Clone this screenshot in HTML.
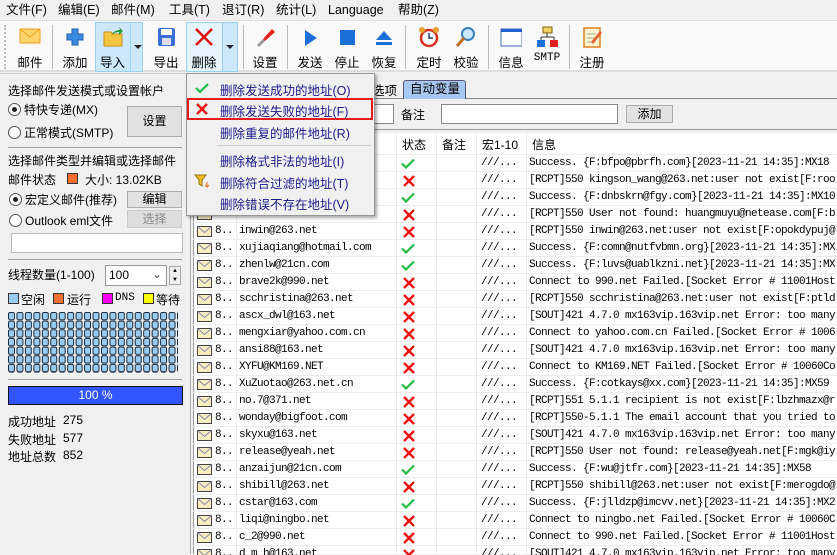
<!DOCTYPE html><html><head><meta charset="utf-8"><style>
*{box-sizing:border-box;margin:0;padding:0}
body{width:837px;height:554px;overflow:hidden;background:#f0f0f0;font-family:"Liberation Sans","Noto Sans CJK SC",sans-serif;font-size:12px;color:#000;position:relative}
.a{position:absolute;white-space:nowrap}
.menu span{position:absolute;top:2px;font-size:12.5px;line-height:16px;height:16px}
.tb{position:absolute;top:20px;left:0;width:837px;height:52px;background:#f9f9f9;border-top:1px solid #e0e0e0;border-bottom:2px solid #ddd}
.ti{position:absolute;top:0;height:52px;text-align:center}
.ti .l{position:absolute;top:31px;left:0;right:0;font-size:12.5px}
.ti svg{position:absolute;top:5px;left:50%;margin-left:-11px}
.sep{position:absolute;top:4px;width:1px;height:44px;background:#bbb}
.btn{position:absolute;background:#e1e1e1;border:1px solid #adadad;text-align:center}
.rad{position:absolute;width:13px;height:13px;border:1px solid #555;border-radius:50%;background:#fff}
.rad.on::after{content:"";position:absolute;left:3px;top:3px;width:5px;height:5px;border-radius:50%;background:#222}
.hl{position:absolute;height:1px;background:#a0a0a0}
.tbl{position:absolute;left:193px;top:133px;width:644px;height:421px;background:#fff;border-left:1px solid #999;overflow:hidden}
.vl{position:absolute;top:0;width:1px;height:421px;background:#ececec}
.mi{position:absolute;left:33px;font-size:12.5px;color:#1a1a8c}
</style></head><body>
<div class="menu">
<span style="left:6px">文件(F)</span><span style="left:58px">编辑(E)</span><span style="left:111px">邮件(M)</span><span style="left:169px">工具(T)</span><span style="left:222px">退订(R)</span><span style="left:276px">统计(L)</span><span style="left:328px;font-family:'Liberation Sans',sans-serif">Language</span><span style="left:398px">帮助(Z)</span>
</div>
<div class="tb">
<div class="a" style="left:4px;top:4px;width:2px;height:44px;border-left:2px dotted #bbb"></div>
<div class="ti" style="left:10px;width:40px"><svg width="22" height="20"><rect x="1" y="3" width="20" height="14" fill="#ffd36a" stroke="#e8a020"/><path d="M1 3l10 8 10-8" fill="none" stroke="#e8a020"/></svg><div class="l">邮件</div></div>
<div class="sep" style="left:52px"></div>
<div class="ti" style="left:56px;width:38px"><svg width="22" height="22"><path d="M8 3h6v5h5v6h-5v5H8v-5H3V8h5z" fill="#3d8be0" stroke="#1d5ab0"/></svg><div class="l">添加</div></div>
<div class="a" style="left:95px;top:1px;width:48px;height:50px;background:#cce8fa;border:1px solid #99d1f5"></div>
<div class="a" style="left:130px;top:1px;width:1px;height:50px;background:#99d1f5"></div>
<div class="ti" style="left:95px;width:35px"><svg width="22" height="22"><path d="M2 6h7l2 2h9v12H2z" fill="#f5c542" stroke="#c8901a"/><path d="M9 10c2-5 6-6 9-6l-1-3 4 4-4 4v-3c-3 0-6 1-8 4z" fill="#2a9a3a"/></svg><div class="l">导入</div></div>
<div class="a" style="left:134px;top:24px;border:4px solid transparent;border-top:4px solid #222"></div>
<div class="ti" style="left:148px;width:36px"><svg width="22" height="22"><rect x="3" y="2" width="17" height="18" rx="2" fill="#3a6ed8"/><rect x="6" y="3" width="11" height="6" fill="#fff"/><rect x="7" y="12" width="9" height="7" fill="#dde"/></svg><div class="l">导出</div></div>
<div class="a" style="left:186px;top:1px;width:52px;height:50px;background:#e5f3fc;border:1px solid #99d1f5"></div>
<div class="a" style="left:222px;top:1px;width:16px;height:50px;background:#cce8fa;border:1px solid #99d1f5"></div>
<div class="ti" style="left:186px;width:36px"><svg width="22" height="22"><path d="M3 3l16 16M19 3L3 19" stroke="#e01010" stroke-width="2.5"/></svg><div class="l">删除</div></div>
<div class="a" style="left:226px;top:24px;border:4px solid transparent;border-top:4px solid #222"></div>
<div class="sep" style="left:243px"></div>
<div class="ti" style="left:247px;width:36px"><svg width="22" height="22"><path d="M9 13l9-10 3 3-10 9z" fill="#e02020"/><path d="M3 19l6-6 2 2-6 6z" fill="#999"/></svg><div class="l">设置</div></div>
<div class="sep" style="left:287px"></div>
<div class="ti" style="left:292px;width:36px"><svg width="22" height="22"><path d="M6 4l12 8-12 8z" fill="#1d6fd8"/></svg><div class="l">发送</div></div>
<div class="ti" style="left:329px;width:36px"><svg width="22" height="22"><rect x="4" y="4" width="15" height="15" fill="#1d6fd8"/></svg><div class="l">停止</div></div>
<div class="ti" style="left:366px;width:36px"><svg width="22" height="22"><path d="M11 5l8 9H3z" fill="#1d6fd8"/><rect x="3" y="16" width="16" height="3" fill="#1d6fd8"/></svg><div class="l">恢复</div></div>
<div class="sep" style="left:405px"></div>
<div class="ti" style="left:411px;width:36px"><svg width="22" height="22"><circle cx="11" cy="12" r="8" fill="#fff" stroke="#d83020" stroke-width="2.5"/><path d="M11 7v5h4" stroke="#236" fill="none" stroke-width="1.5"/><circle cx="4" cy="4" r="3" fill="#e8a030"/><circle cx="18" cy="4" r="3" fill="#e8a030"/></svg><div class="l">定时</div></div>
<div class="ti" style="left:448px;width:36px"><svg width="22" height="22"><circle cx="13" cy="8" r="6" fill="#cde8ff" stroke="#3a80c0" stroke-width="2"/><path d="M9 12l-7 8" stroke="#c07020" stroke-width="3"/></svg><div class="l">校验</div></div>
<div class="sep" style="left:488px"></div>
<div class="ti" style="left:493px;width:36px"><svg width="22" height="22"><rect x="1" y="3" width="21" height="17" fill="#fff" stroke="#4070c0"/><rect x="1" y="3" width="21" height="3" fill="#2060d0"/></svg><div class="l">信息</div></div>
<div class="ti" style="left:529px;width:36px"><svg width="22" height="22"><rect x="7" y="1" width="9" height="6" fill="#f0d060" stroke="#806010"/><path d="M11 7v4M5 11h13M5 11v3M18 11v3" stroke="#333" fill="none"/><rect x="1" y="14" width="8" height="7" fill="#1d6fd8"/><rect x="14" y="14" width="8" height="7" fill="#e02020"/></svg><div class="l" style="font-family:'Liberation Mono',monospace;font-size:11px">SMTP</div></div>
<div class="sep" style="left:569px"></div>
<div class="ti" style="left:574px;width:36px"><svg width="22" height="22"><rect x="3" y="2" width="16" height="19" fill="#fff4d0" stroke="#e08020" stroke-width="1.5"/><path d="M6 8h9M6 12h8M6 16h6" stroke="#9a9"/><path d="M10 16l9-11 2 2-9 11z" fill="#e06030"/></svg><div class="l">注册</div></div>
</div>

<!-- left panel -->
<div class="a" style="left:0;top:73px;width:191px;height:481px;border-right:1px solid #aaa;border-top:1px solid #ccc"></div>
<div class="a" style="left:8px;top:82px">选择邮件发送模式或设置帐户</div>
<div class="rad on" style="left:8px;top:103px"></div><div class="a" style="left:24px;top:101px">特快专递(MX)</div>
<div class="btn" style="left:127px;top:106px;width:55px;height:31px;line-height:29px">设置</div>
<div class="rad" style="left:8px;top:126px"></div><div class="a" style="left:24px;top:124px">正常模式(SMTP)</div>
<div class="hl" style="left:8px;top:147px;width:174px"></div>
<div class="a" style="left:8px;top:152px">选择邮件类型并编辑或选择邮件</div>
<div class="a" style="left:8px;top:171px">邮件状态</div><div class="a" style="left:67px;top:173px;width:11px;height:11px;background:#f07030;border:1px solid #333"></div><div class="a" style="left:85px;top:171px">大小: 13.02KB</div>
<div class="rad on" style="left:9px;top:193px"></div><div class="a" style="left:25px;top:191px">宏定义邮件(推荐)</div>
<div class="btn" style="left:127px;top:191px;width:55px;height:17px;line-height:15px">编辑</div>
<div class="rad" style="left:9px;top:214px"></div><div class="a" style="left:25px;top:212px">Outlook eml文件</div>
<div class="btn" style="left:127px;top:210px;width:55px;height:18px;line-height:16px;color:#888;background:#ddd;border-color:#ccc">选择</div>
<div class="a" style="left:11px;top:233px;width:172px;height:20px;background:#fff;border:1px solid #bbb"></div>
<div class="hl" style="left:8px;top:259px;width:174px"></div>
<div class="a" style="left:8px;top:266px">线程数量(1-100)</div>
<div class="a" style="left:105px;top:265px;width:62px;height:21px;background:#fff;border:1px solid #999;padding:2px 3px">100<span style="position:absolute;right:4px;top:1px;color:#555">⌄</span></div>
<div class="a" style="left:169px;top:266px;width:12px;height:19px;border:1px solid #aaa;background:#eee;font-size:6px;line-height:9px;text-align:center">▲<br>▼</div>
<div class="a" style="left:8px;top:293px;width:11px;height:11px;background:#99ccf0;border:1px solid #333"></div><div class="a" style="left:21px;top:291px">空闲</div>
<div class="a" style="left:53px;top:293px;width:11px;height:11px;background:#f07030;border:1px solid #333"></div><div class="a" style="left:67px;top:291px">运行</div>
<div class="a" style="left:102px;top:293px;width:11px;height:11px;background:#f0f;border:1px solid #333"></div><div class="a" style="left:115px;top:292px;font-family:'Liberation Mono';font-size:11px">DNS</div>
<div class="a" style="left:143px;top:293px;width:11px;height:11px;background:#ff0;border:1px solid #333"></div><div class="a" style="left:156px;top:291px">等待</div>
<svg class="a" style="left:8px;top:312px" width="170" height="61"><defs><pattern id="cp" width="8.45" height="8.65" patternUnits="userSpaceOnUse"><rect x=".5" y=".5" width="6" height="7.3" rx="1.5" fill="#99ccf0" stroke="#1a2a3a" stroke-width="1"/></pattern></defs><rect width="170" height="61" fill="url(#cp)"/></svg>
<div class="hl" style="left:8px;top:379px;width:174px"></div>
<div class="a" style="left:8px;top:386px;width:175px;height:19px;background:#3355ff;border:1px solid #111;color:#fff;text-align:center;line-height:17px">100 %</div>
<div class="a" style="left:8px;top:413px">成功地址</div><div class="a" style="left:63px;top:413px">275</div>
<div class="a" style="left:8px;top:431px">失败地址</div><div class="a" style="left:63px;top:431px">577</div>
<div class="a" style="left:8px;top:448px">地址总数</div><div class="a" style="left:63px;top:448px">852</div>

<!-- right top -->
<div class="a" style="left:192px;top:98px;width:645px;height:1px;background:#888"></div>
<div class="a" style="left:372px;top:80px;font-size:12.5px">选项</div>
<div class="a" style="left:403px;top:80px;width:63px;height:19px;background:#a8c8f0;border:1px solid #557;border-bottom:none;border-radius:3px 3px 0 0;padding-left:6px;font-size:12.5px;line-height:17px">自动变量</div>
<div class="a" style="left:370px;top:104px;width:24px;height:20px;background:#fff;border:1px solid #888"></div>
<div class="a" style="left:401px;top:106px">备注</div>
<div class="a" style="left:441px;top:104px;width:177px;height:20px;background:#fff;border:1px solid #888"></div>
<div class="btn" style="left:626px;top:105px;width:47px;height:18px;line-height:16px">添加</div>
<div class="a" style="left:192px;top:129px;width:645px;height:1px;background:#999"></div>

<div class="tbl">
<div class="vl" style="left:42px"></div><div class="vl" style="left:202px"></div><div class="vl" style="left:242px"></div><div class="vl" style="left:282px"></div><div class="vl" style="left:332px"></div>
<div class="a" style="left:0;top:0;width:644px;height:22px;border-bottom:1px solid #ececec"></div>
<div class="a" style="left:208px;top:3px">状态</div><div class="a" style="left:248px;top:3px">备注</div><div class="a" style="left:288px;top:3px">宏1-10</div><div class="a" style="left:338px;top:3px">信息</div>
</div>
<svg width="0" height="0" style="position:absolute"><defs>
<symbol id="env" viewBox="0 0 15 11"><rect x=".5" y=".5" width="14" height="10" fill="#f6eec0" stroke="#444"/><path d="M.5 .5l7 6 7-6" fill="none" stroke="#8888aa"/></symbol>
<symbol id="ok" viewBox="0 0 14 10"><path d="M1 5l4 4 8-8" fill="none" stroke="#22bb44" stroke-width="2.2"/></symbol>
<symbol id="no" viewBox="0 0 12 12"><path d="M1 1l10 10M11 1L1 11" stroke="#ee1111" stroke-width="2.4"/></symbol>
</defs></svg>
<div class="a" style="left:193px;top:155px;width:644px;height:400px;overflow:hidden">
<style>.r{position:absolute;left:0;width:644px;height:17px;border-bottom:1px solid #ececec;font-family:"Liberation Mono",monospace;font-size:11px;letter-spacing:-0.6px}.r>*{position:absolute}.r .e{left:4px;top:3px;width:15px;height:11px}.r .n{left:22px;top:2px}.r .m{left:46px;top:2px}.r .s{left:208px;top:3px;width:14px;height:11px}.r .x{left:210px;top:3px;width:12px;height:12px}.r .g{left:288px;top:2px}.r .i{left:336px;top:2px}</style>
<div class="r" style="top:0"><svg class="e"><use href="#env"/></svg><span class="n">8..</span><svg class="s"><use href="#ok"/></svg><span class="g">///...</span><span class="i">Success. {F:bfpo@pbrfh.com}[2023-11-21 14:35]:MX18</span></div>
<div class="r" style="top:17px"><svg class="e"><use href="#env"/></svg><span class="n">8..</span><svg class="x"><use href="#no"/></svg><span class="g">///...</span><span class="i">[RCPT]550 kingson_wang@263.net:user not exist[F:roo</span></div>
<div class="r" style="top:34px"><svg class="e"><use href="#env"/></svg><span class="n">8..</span><svg class="s"><use href="#ok"/></svg><span class="g">///...</span><span class="i">Success. {F:dnbskrn@fgy.com}[2023-11-21 14:35]:MX10</span></div>
<div class="r" style="top:51px"><svg class="e"><use href="#env"/></svg><span class="n">8..</span><svg class="x"><use href="#no"/></svg><span class="g">///...</span><span class="i">[RCPT]550 User not found: huangmuyu@netease.com[F:b</span></div>
<div class="r" style="top:68px"><svg class="e"><use href="#env"/></svg><span class="n">8..</span><span class="m">inwin@263.net</span><svg class="x"><use href="#no"/></svg><span class="g">///...</span><span class="i">[RCPT]550 inwin@263.net:user not exist[F:opokdypuj@</span></div>
<div class="r" style="top:85px"><svg class="e"><use href="#env"/></svg><span class="n">8..</span><span class="m">xujiaqiang@hotmail.com</span><svg class="s"><use href="#ok"/></svg><span class="g">///...</span><span class="i">Success. {F:comn@nutfvbmn.org}[2023-11-21 14:35]:MX</span></div>
<div class="r" style="top:102px"><svg class="e"><use href="#env"/></svg><span class="n">8..</span><span class="m">zhenlw@21cn.com</span><svg class="s"><use href="#ok"/></svg><span class="g">///...</span><span class="i">Success. {F:luvs@uablkzni.net}[2023-11-21 14:35]:MX</span></div>
<div class="r" style="top:119px"><svg class="e"><use href="#env"/></svg><span class="n">8..</span><span class="m">brave2k@990.net</span><svg class="x"><use href="#no"/></svg><span class="g">///...</span><span class="i">Connect to 990.net Failed.[Socket Error # 11001Host</span></div>
<div class="r" style="top:136px"><svg class="e"><use href="#env"/></svg><span class="n">8..</span><span class="m">scchristina@263.net</span><svg class="x"><use href="#no"/></svg><span class="g">///...</span><span class="i">[RCPT]550 scchristina@263.net:user not exist[F:ptld</span></div>
<div class="r" style="top:153px"><svg class="e"><use href="#env"/></svg><span class="n">8..</span><span class="m">ascx_dwl@163.net</span><svg class="x"><use href="#no"/></svg><span class="g">///...</span><span class="i">[SOUT]421 4.7.0 mx163vip.163vip.net Error: too many</span></div>
<div class="r" style="top:170px"><svg class="e"><use href="#env"/></svg><span class="n">8..</span><span class="m">mengxiar@yahoo.com.cn</span><svg class="x"><use href="#no"/></svg><span class="g">///...</span><span class="i">Connect to yahoo.com.cn Failed.[Socket Error # 1006</span></div>
<div class="r" style="top:187px"><svg class="e"><use href="#env"/></svg><span class="n">8..</span><span class="m">ansi88@163.net</span><svg class="x"><use href="#no"/></svg><span class="g">///...</span><span class="i">[SOUT]421 4.7.0 mx163vip.163vip.net Error: too many</span></div>
<div class="r" style="top:204px"><svg class="e"><use href="#env"/></svg><span class="n">8..</span><span class="m">XYFU@KM169.NET</span><svg class="x"><use href="#no"/></svg><span class="g">///...</span><span class="i">Connect to KM169.NET Failed.[Socket Error # 10060Co</span></div>
<div class="r" style="top:221px"><svg class="e"><use href="#env"/></svg><span class="n">8..</span><span class="m">XuZuotao@263.net.cn</span><svg class="s"><use href="#ok"/></svg><span class="g">///...</span><span class="i">Success. {F:cotkays@xx.com}[2023-11-21 14:35]:MX59</span></div>
<div class="r" style="top:238px"><svg class="e"><use href="#env"/></svg><span class="n">8..</span><span class="m">no.7@371.net</span><svg class="x"><use href="#no"/></svg><span class="g">///...</span><span class="i">[RCPT]551 5.1.1 recipient is not exist[F:lbzhmazx@r</span></div>
<div class="r" style="top:255px"><svg class="e"><use href="#env"/></svg><span class="n">8..</span><span class="m">wonday@bigfoot.com</span><svg class="x"><use href="#no"/></svg><span class="g">///...</span><span class="i">[RCPT]550-5.1.1 The email account that you tried to</span></div>
<div class="r" style="top:272px"><svg class="e"><use href="#env"/></svg><span class="n">8..</span><span class="m">skyxu@163.net</span><svg class="x"><use href="#no"/></svg><span class="g">///...</span><span class="i">[SOUT]421 4.7.0 mx163vip.163vip.net Error: too many</span></div>
<div class="r" style="top:289px"><svg class="e"><use href="#env"/></svg><span class="n">8..</span><span class="m">release@yeah.net</span><svg class="x"><use href="#no"/></svg><span class="g">///...</span><span class="i">[RCPT]550 User not found: release@yeah.net[F:mgk@iy</span></div>
<div class="r" style="top:306px"><svg class="e"><use href="#env"/></svg><span class="n">8..</span><span class="m">anzaijun@21cn.com</span><svg class="s"><use href="#ok"/></svg><span class="g">///...</span><span class="i">Success. {F:wu@jtfr.com}[2023-11-21 14:35]:MX58</span></div>
<div class="r" style="top:323px"><svg class="e"><use href="#env"/></svg><span class="n">8..</span><span class="m">shibill@263.net</span><svg class="x"><use href="#no"/></svg><span class="g">///...</span><span class="i">[RCPT]550 shibill@263.net:user not exist[F:merogdo@</span></div>
<div class="r" style="top:340px"><svg class="e"><use href="#env"/></svg><span class="n">8..</span><span class="m">cstar@163.com</span><svg class="s"><use href="#ok"/></svg><span class="g">///...</span><span class="i">Success. {F:jlldzp@imcvv.net}[2023-11-21 14:35]:MX2</span></div>
<div class="r" style="top:357px"><svg class="e"><use href="#env"/></svg><span class="n">8..</span><span class="m">liqi@ningbo.net</span><svg class="x"><use href="#no"/></svg><span class="g">///...</span><span class="i">Connect to ningbo.net Failed.[Socket Error # 10060C</span></div>
<div class="r" style="top:374px"><svg class="e"><use href="#env"/></svg><span class="n">8..</span><span class="m">c_2@990.net</span><svg class="x"><use href="#no"/></svg><span class="g">///...</span><span class="i">Connect to 990.net Failed.[Socket Error # 11001Host</span></div>
<div class="r" style="top:391px"><svg class="e"><use href="#env"/></svg><span class="n">8..</span><span class="m">d_m_h@163.net</span><svg class="x"><use href="#no"/></svg><span class="g">///...</span><span class="i">[SOUT]421 4.7.0 mx163vip.163vip.net Error: too many</span></div>
</div>

<!-- popup menu -->
<div class="a" style="left:186px;top:73px;width:189px;height:143px;background:#f0f0f0;border:1px solid #979797;box-shadow:2px 2px 3px rgba(0,0,0,.35)">
<svg class="a" style="left:8px;top:9px" width="14" height="10"><use href="#ok"/></svg>
<div class="mi" style="top:6px">删除发送成功的地址(O)</div>
<div class="a" style="left:0;top:24px;width:186px;height:22px;border:2px solid #e41c1c"></div>
<svg class="a" style="left:9px;top:29px" width="12" height="12"><use href="#no"/></svg>
<div class="mi" style="top:27px">删除发送失败的地址(F)</div>
<div class="mi" style="top:49px">删除重复的邮件地址(R)</div>
<div class="a" style="left:30px;top:71px;width:154px;height:1px;background:#ccc"></div>
<div class="mi" style="top:77px">删除格式非法的地址(I)</div>
<svg class="a" style="left:7px;top:100px" width="16" height="14"><path d="M1 1h11l-4 5v6l-3-2V6z" fill="#f0c020" stroke="#907010"/><path d="M13 8v5M11 11l2 2 2-2" stroke="#e07010" fill="none"/></svg>
<div class="mi" style="top:99px">删除符合过滤的地址(T)</div>
<div class="mi" style="top:120px">删除错误不存在地址(V)</div>
</div>
</body></html>
